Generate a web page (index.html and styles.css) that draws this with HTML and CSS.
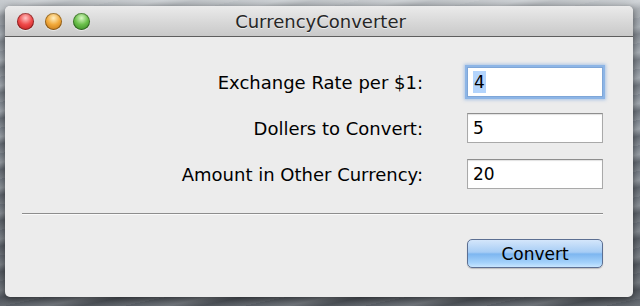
FILE: index.html
```html
<!DOCTYPE html>
<html lang="en">
<head>
    <meta charset="UTF-8">
    <meta name="viewport" content="width=device-width, initial-scale=1.0">
    <title>CurrencyConverter</title>
    <link rel="stylesheet" href="styles.css">
</head>
<body>
    <div class="window">
        <div class="titlebar">
            <div class="lights">
                <span class="light red"></span>
                <span class="light yellow"></span>
                <span class="light green"></span>
            </div>
            <div class="title">CurrencyConverter</div>
        </div>
        <div class="content">
            <form class="fields" id="convert-form">
                <label for="rate">Exchange Rate per $1:</label>
                <div class="field focused"><span class="selected">4</span></div>
                <label for="dollars">Dollers to Convert:</label>
                <div class="field">5</div>
                <label for="amount">Amount in Other Currency:</label>
                <div class="field">20</div>
            </form>
            <hr class="separator">
            <div class="actions">
                <button type="button" class="convert">Convert</button>
            </div>
        </div>
    </div>
</body>
</html>
```

FILE: styles.css
```css
body {
    margin: 0;
    padding: 0;
    width: 640px;
    height: 306px;
    overflow: hidden;
    font-family: 'DejaVu Sans', 'Liberation Sans', sans-serif;
    background:
        linear-gradient(180deg, rgba(225, 228, 230, 0.75) 0%, rgba(200, 204, 208, 0.3) 8%, rgba(60, 64, 70, 0) 40%, rgba(40, 42, 46, 0.4) 100%),
        repeating-linear-gradient(168deg, #7d858f 0px, #a4abb2 9px, #6c737c 16px, #8f969e 25px),
        #6b7078;
}

.window {
    margin: 6px 7px 0 5px;
    height: 291px;
    background: #ececec;
    border-radius: 5px;
    box-shadow: 0 2px 8px rgba(0, 0, 0, 0.55);
    overflow: hidden;
}

.titlebar {
    position: relative;
    height: 30px;
    background: linear-gradient(#ebebeb, #d6d6d6 60%, #c9c9c9);
    border-bottom: 1px solid #5e5e5e;
    display: flex;
    align-items: center;
    justify-content: center;
}

.lights {
    position: absolute;
    left: 12px;
    top: 7px;
    display: flex;
    gap: 11px;
}

.light {
    width: 17px;
    height: 17px;
    border-radius: 50%;
    box-shadow: inset 0 0 0 1px rgba(0, 0, 0, 0.35), 0 1px 1px rgba(255, 255, 255, 0.6);
}

.red {
    background: radial-gradient(circle at 50% 30%, #ffc4c4 0%, #f04a4a 45%, #b41515 100%);
}

.yellow {
    background: radial-gradient(circle at 50% 30%, #ffefc0 0%, #f2a93a 45%, #b86a0d 100%);
}

.green {
    background: radial-gradient(circle at 50% 30%, #d8f7c4 0%, #6ac04a 45%, #2d7d1c 100%);
}

.title {
    font-size: 18px;
    color: #262626;
    text-shadow: 0 1px 0 rgba(255, 255, 255, 0.6);
    margin-left: 3px;
}

.content {
    padding: 30px 30px 0 17px;
}

.fields {
    display: grid;
    grid-template-columns: auto 136px;
    grid-auto-rows: 30px;
    column-gap: 44px;
    row-gap: 16px;
    justify-content: end;
    align-items: center;
    margin: 0;
}

.fields label {
    font-size: 18px;
    color: #000;
    text-align: right;
}

.field {
    box-sizing: border-box;
    height: 30px;
    background: #fff;
    border: 1px solid #a9a9a9;
    border-top-color: #8e8e8e;
    box-shadow: inset 0 1px 1px rgba(0, 0, 0, 0.12);
    font-size: 17px;
    color: #000;
    padding: 0 5px;
    display: flex;
    align-items: center;
}

.field.focused {
    border-color: #7ea6d8;
    box-shadow: 0 0 0 2px #8db5e6, 0 0 3px 3px rgba(110, 160, 225, 0.5);
}

.selected {
    background: #b3d4fc;
    padding: 1px 1px;
}

.separator {
    margin: 24px 0 0 0;
    border: none;
    border-top: 1px solid #8d8d8d;
    border-bottom: 1px solid #fafafa;
}

.actions {
    display: flex;
    justify-content: flex-end;
    margin-top: 24px;
}

.convert {
    width: 136px;
    height: 29px;
    border: 1px solid #5c6f92;
    border-radius: 5px;
    background: linear-gradient(#d4e6fb 0%, #a7cdf5 45%, #7db6f0 52%, #a6d3fb 85%, #c8e6ff 100%);
    font-family: 'DejaVu Sans', 'Liberation Sans', sans-serif;
    font-size: 17px;
    color: #000;
    padding: 0;
    box-shadow: 0 1px 1px rgba(0, 0, 0, 0.2);
}
```
